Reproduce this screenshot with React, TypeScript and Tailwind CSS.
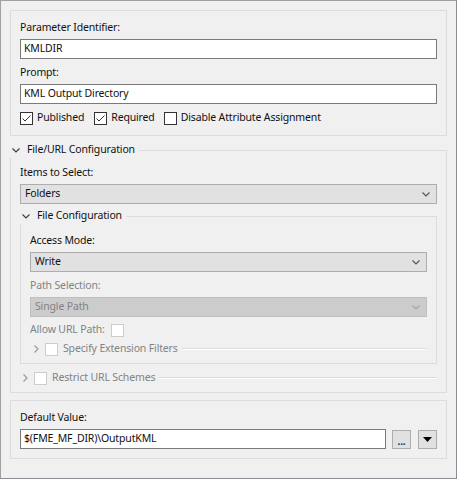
import React from 'react';

const font = { fontFamily: '"Segoe UI", "Noto Sans", "DejaVu Sans", sans-serif' };

function Check({ checked = false, disabled = false, className = '' }: { checked?: boolean; disabled?: boolean; className?: string }) {
  return (
    <span
      className={`flex h-[13px] w-[13px] shrink-0 items-center justify-center border bg-white ${
        disabled ? 'border-[#cccccc]' : 'border-[#333333]'
      } ${className}`}
    >
      {checked && (
        <svg width="11" height="11" viewBox="0 0 11 11">
          <polyline points="1.5,5.5 4,8 9.5,2.5" fill="none" stroke="#333333" strokeWidth="1" />
        </svg>
      )}
    </span>
  );
}

function ChevronDown({ color = '#404040' }: { color?: string }) {
  return (
    <svg width="8" height="5" viewBox="0 0 8 5" className="shrink-0">
      <polyline points="0.5,0.5 4,4 7.5,0.5" fill="none" stroke={color} strokeWidth="1.2" />
    </svg>
  );
}

function ChevronRight() {
  return (
    <svg width="5" height="8" viewBox="0 0 5 8" className="shrink-0">
      <polyline points="0.5,0.5 4,4 0.5,7.5" fill="none" stroke="#9a9a9a" strokeWidth="1.2" />
    </svg>
  );
}

function Select({ value, disabled = false }: { value: string; disabled?: boolean }) {
  return (
    <div
      className={`flex h-[20px] items-center justify-between border pl-[4px] pr-[6px] ${
        disabled
          ? 'border-[#bfbfbf] bg-[#cccccc] text-[#838383]'
          : 'border-[#adadad] bg-[#e1e1e1] text-[#111111]'
      }`}
    >
      <span>{value}</span>
      <ChevronDown color={disabled ? '#a8a8a8' : '#555555'} />
    </div>
  );
}

function TextField({ value, className = '' }: { value: string; className?: string }) {
  return (
    <div className={`flex h-[20px] items-center border border-[#7a7a7a] bg-white pl-[3px] text-[#111111] ${className}`}>
      {value}
    </div>
  );
}

function Label({ children, muted = false, className = '' }: { children: React.ReactNode; muted?: boolean; className?: string }) {
  return (
    <div className={`h-[16px] leading-[16px] ${muted ? 'text-[#838383]' : 'text-[#111111]'} ${className}`}>
      {children}
    </div>
  );
}

export default function App() {
  return (
    <div
      style={font}
      className="h-[479px] w-[457px] border-t border-l border-r border-b border-t-[#a0a0a0] border-l-[#a0a0a0] border-r-[#8c8c94] border-b-[#8c8c94] bg-[#f0f0f0] px-[9px] pt-[9px] text-[10.5px] tracking-[-0.15px]"
    >
      {/* Parameter section */}
      <div className="h-[126px] border border-[#dcdcdc] px-[9px] pt-[8px]">
        <Label>Parameter Identifier:</Label>
        <TextField value="KMLDIR" className="mt-[4px]" />
        <Label className="mt-[5px]">Prompt:</Label>
        <TextField value="KML Output Directory" className="mt-[4px]" />
        <div className="mt-[6px] flex h-[16px] items-center text-[#111111]">
          <Check checked />
          <span className="ml-[4px]">Published</span>
          <Check checked className="ml-[10px]" />
          <span className="ml-[4px]">Required</span>
          <Check className="ml-[9px]" />
          <span className="ml-[4px]">Disable Attribute Assignment</span>
        </div>
      </div>

      {/* File/URL configuration */}
      <div className="mt-[6px]">
        <div className="flex h-[16px] items-center">
          <span className="ml-[2px]">
            <ChevronDown />
          </span>
          <span className="ml-[7px] text-[#111111]">File/URL Configuration</span>
          <div className="ml-[4px] mt-[8px] flex-1 self-stretch border-t border-r border-[#dcdcdc]" />
        </div>
        <div className="border-l border-r border-b border-[#dcdcdc] px-[9px] pt-[6px] pb-[6px]">
          <Label>Items to Select:</Label>
          <div className="mt-[4px]">
            <Select value="Folders" />
          </div>

          <div className="mt-[4px] flex h-[16px] items-center">
            <span className="ml-[2px]">
              <ChevronDown />
            </span>
            <span className="ml-[7px] text-[#111111]">File Configuration</span>
            <div className="ml-[4px] mt-[8px] flex-1 self-stretch border-t border-r border-[#dcdcdc]" />
          </div>
          <div className="border-l border-r border-b border-[#dcdcdc] px-[9px] pt-[8px] pb-[6px]">
            <Label>Access Mode:</Label>
            <div className="mt-[4px]">
              <Select value="Write" />
            </div>
            <Label muted className="mt-[5px]">Path Selection:</Label>
            <div className="mt-[4px]">
              <Select value="Single Path" disabled />
            </div>
            <div className="mt-[5px] flex h-[16px] items-center text-[#838383]">
              <span>Allow URL Path:</span>
              <Check disabled className="ml-[6px]" />
            </div>
            <div className="mt-[3px] flex h-[16px] items-center text-[#838383]">
              <span className="ml-[4px]">
                <ChevronRight />
              </span>
              <Check disabled className="ml-[6px]" />
              <span className="ml-[5px]">Specify Extension Filters</span>
              <div className="ml-[4px] h-[2px] flex-1 border-t border-b border-t-[#dcdcdc] border-b-white" />
            </div>
          </div>

          <div className="mt-[6px] flex h-[16px] items-center text-[#838383]">
            <span className="ml-[3px]">
              <ChevronRight />
            </span>
            <Check disabled className="ml-[6px]" />
            <span className="ml-[5px]">Restrict URL Schemes</span>
            <div className="ml-[4px] h-[2px] flex-1 border-t border-b border-t-[#dcdcdc] border-b-white" />
          </div>
        </div>
      </div>

      {/* Default value */}
      <div className="mt-[7px] h-[59px] border border-[#dcdcdc] px-[9px] pt-[8px]">
        <Label>Default Value:</Label>
        <div className="mt-[4px] flex items-center">
          <TextField value="$(FME_MF_DIR)\OutputKML" className="flex-1" />
          <button className="ml-[6px] flex h-[19px] w-[19px] items-end justify-center border border-[#adadad] bg-[#e1e1e1] pb-[3px] text-[10px] font-bold leading-[8px] text-[#1a2a6a]">
            ...
          </button>
          <button className="ml-[7px] flex h-[19px] w-[19px] items-center justify-center border border-[#adadad] bg-[#e1e1e1]">
            <svg width="9" height="5" viewBox="0 0 9 5">
              <polygon points="0,0 9,0 4.5,5" fill="#000000" />
            </svg>
          </button>
        </div>
      </div>
    </div>
  );
}
